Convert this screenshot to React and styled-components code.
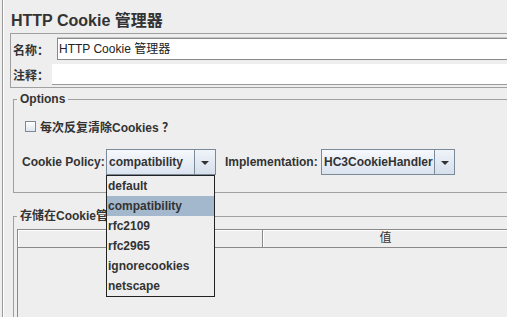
import React from "react";
import styled, { createGlobalStyle } from "styled-components";

const GlobalStyle = createGlobalStyle`
  html, body {
    margin: 0;
    padding: 0;
    background: #eeeeee;
    overflow: hidden;
  }
  body {
    font-family: "Liberation Sans", Arial, "Noto Sans CJK SC", sans-serif;
    color: #333333;
  }
`;

const Window = styled.div`
  width: 507px;
  height: 317px;
  overflow: hidden;
  display: flex;
  padding-left: 2px;
  box-sizing: border-box;
`;

const Panel = styled.div`
  flex: none;
  width: 512px;
  height: 420px;
  border-left: 1px solid #9a9a9a;
  box-shadow: inset 1px 0 0 #ffffff;
  padding: 11px 0 0 7px;
  display: flex;
  flex-direction: column;
  box-sizing: border-box;
`;

const Title = styled.div`
  margin-left: 1px;
  height: 20px;
  line-height: 20px;
  font-size: 16px;
  font-weight: 700;
  color: #333333;
  white-space: nowrap;
`;

const NameBox = styled.div`
  margin-top: 2px;
  border: 1px solid #a0a0a0;
  padding: 4px 0 2px 2px;
  display: flex;
  flex-direction: column;
  gap: 4px;
`;

const FieldRow = styled.div`
  display: flex;
  align-items: center;
`;

const Label = styled.span`
  flex: none;
  width: ${(p) => p.$width}px;
  font-size: 12px;
  font-weight: 700;
  color: #333333;
  white-space: nowrap;
`;

const NameInput = styled.div`
  flex: 1;
  height: 22px;
  box-sizing: border-box;
  background: #ffffff;
  border: 1px solid #8a8a8a;
  border-right: none;
  box-shadow: 0 -1px 0 #c8c8c8;
  padding-left: 1px;
  font-size: 12px;
  line-height: 20px;
  color: #222222;
  white-space: nowrap;
`;

const CommentInput = styled.div`
  flex: 1;
  height: 21px;
  box-sizing: border-box;
  background: #ffffff;
  border-bottom: 1px solid #9a9a9a;
`;

const Group = styled.fieldset`
  margin: ${(p) => p.$top}px 0 0 3px;
  padding: 0 0 ${(p) => p.$bottom}px 0;
  border: 1px solid #a0a0a0;
  min-width: 0;
  flex: ${(p) => (p.$grow ? 1 : "none")};
  display: flex;
  flex-direction: column;
`;

const Legend = styled.legend`
  margin-left: 3px;
  padding: 0 3px 0 3px;
  font-size: 12px;
  font-weight: 700;
  line-height: 14px;
  color: #333333;
  white-space: nowrap;
`;

const CheckRow = styled.label`
  margin: 12px 0 0 11px;
  height: 16px;
  display: flex;
  align-items: center;
  gap: 4px;
  font-size: 12px;
  font-weight: 700;
  color: #333333;
`;

const CheckBox = styled.span`
  width: 11px;
  height: 11px;
  box-sizing: border-box;
  border: 1px solid #7a8a99;
  background: linear-gradient(#ffffff, #dfe6ef);
`;

const PolicyRow = styled.div`
  margin: 15px 0 0 8px;
  height: 26px;
  display: flex;
  align-items: center;
`;

const ComboWrap = styled.div`
  position: relative;
  flex: none;
  width: ${(p) => p.$width}px;
  margin-right: ${(p) => p.$after || 0}px;
`;

const Combo = styled.div`
  height: 26px;
  box-sizing: border-box;
  display: flex;
  border: 1px solid #7a8a99;
  background: linear-gradient(#f6f8fc, #e6ecf5 60%, #dbe3ef);
`;

const ComboText = styled.div`
  flex: 1;
  padding-left: 2px;
  line-height: 24px;
  font-size: 12px;
  font-weight: 700;
  color: #333333;
  border-right: 1px solid #7a8a99;
  white-space: nowrap;
  overflow: hidden;
`;

const ComboArrow = styled.div`
  flex: none;
  width: ${(p) => p.$width}px;
  display: flex;
  align-items: center;
  justify-content: center;
  background: linear-gradient(#f0f4fa, #d6dfeb);

  &::after {
    content: "";
    border-left: 4px solid transparent;
    border-right: 4px solid transparent;
    border-top: 4px solid #333333;
    margin-top: 1px;
  }
`;

const PopupList = styled.ul`
  position: absolute;
  top: 100%;
  left: 0;
  width: 109px;
  margin: 0;
  padding: 0;
  list-style: none;
  box-sizing: border-box;
  border: 1px solid #222222;
  background: #eeeeee;
  z-index: 10;
`;

const PopupItem = styled.li`
  height: 20px;
  line-height: 20px;
  padding-left: 1px;
  font-size: 12px;
  font-weight: 700;
  color: #333333;
  background: ${(p) => (p.$selected ? "#a3b8cc" : "transparent")};
`;

const TablePane = styled.div`
  margin: 6px 0 0 3px;
  flex: 1;
  border-top: 1px solid #8a8a8a;
  border-left: 1px solid #8a8a8a;
  display: flex;
  flex-direction: column;
`;

const HeaderRow = styled.div`
  display: flex;
  height: 18px;
  box-sizing: border-box;
  border-bottom: 1px solid #8a8a8a;
  box-shadow: inset 0 1px 0 #ffffff;
`;

const HeaderCell = styled.div`
  flex: none;
  width: ${(p) => p.$width}px;
  box-sizing: border-box;
  border-right: 1px solid #8a8a8a;
  box-shadow: inset 1px 0 0 #ffffff;
  text-align: center;
  font-size: 12px;
  line-height: 17px;
  color: #333333;
`;

const TableBody = styled.div`
  flex: 1;
  background: #eeeeee;
`;

const policies = ["default", "compatibility", "rfc2109", "rfc2965", "ignorecookies", "netscape"];

function App() {
  return (
    <>
      <GlobalStyle />
      <Window>
        <Panel>
          <Title>HTTP Cookie 管理器</Title>
          <NameBox>
            <FieldRow>
              <Label $width={44}>名称：</Label>
              <NameInput>HTTP Cookie 管理器</NameInput>
            </FieldRow>
            <FieldRow>
              <Label $width={39}>注释：</Label>
              <CommentInput />
            </FieldRow>
          </NameBox>

          <Group $top={4} $bottom={17}>
            <Legend>Options</Legend>
            <CheckRow>
              <CheckBox />
              每次反复清除Cookies ？
            </CheckRow>
            <PolicyRow>
              <Label $width={84}>Cookie Policy:</Label>
              <ComboWrap $width={110} $after={9}>
                <Combo>
                  <ComboText>compatibility</ComboText>
                  <ComboArrow $width={20} />
                </Combo>
                <PopupList>
                  {policies.map((p) => (
                    <PopupItem key={p} $selected={p === "compatibility"}>
                      {p}
                    </PopupItem>
                  ))}
                </PopupList>
              </ComboWrap>
              <Label $width={96}>Implementation:</Label>
              <ComboWrap $width={134}>
                <Combo>
                  <ComboText>HC3CookieHandler</ComboText>
                  <ComboArrow $width={19} />
                </Combo>
              </ComboWrap>
            </PolicyRow>
          </Group>

          <Group $top={16} $bottom={0} $grow>
            <Legend>存储在Cookie管理器中的Cookies</Legend>
            <TablePane>
              <HeaderRow>
                <HeaderCell $width={245}>名称</HeaderCell>
                <HeaderCell $width={246}>值</HeaderCell>
              </HeaderRow>
              <TableBody />
            </TablePane>
          </Group>
        </Panel>
      </Window>
    </>
  );
}

export default App;
